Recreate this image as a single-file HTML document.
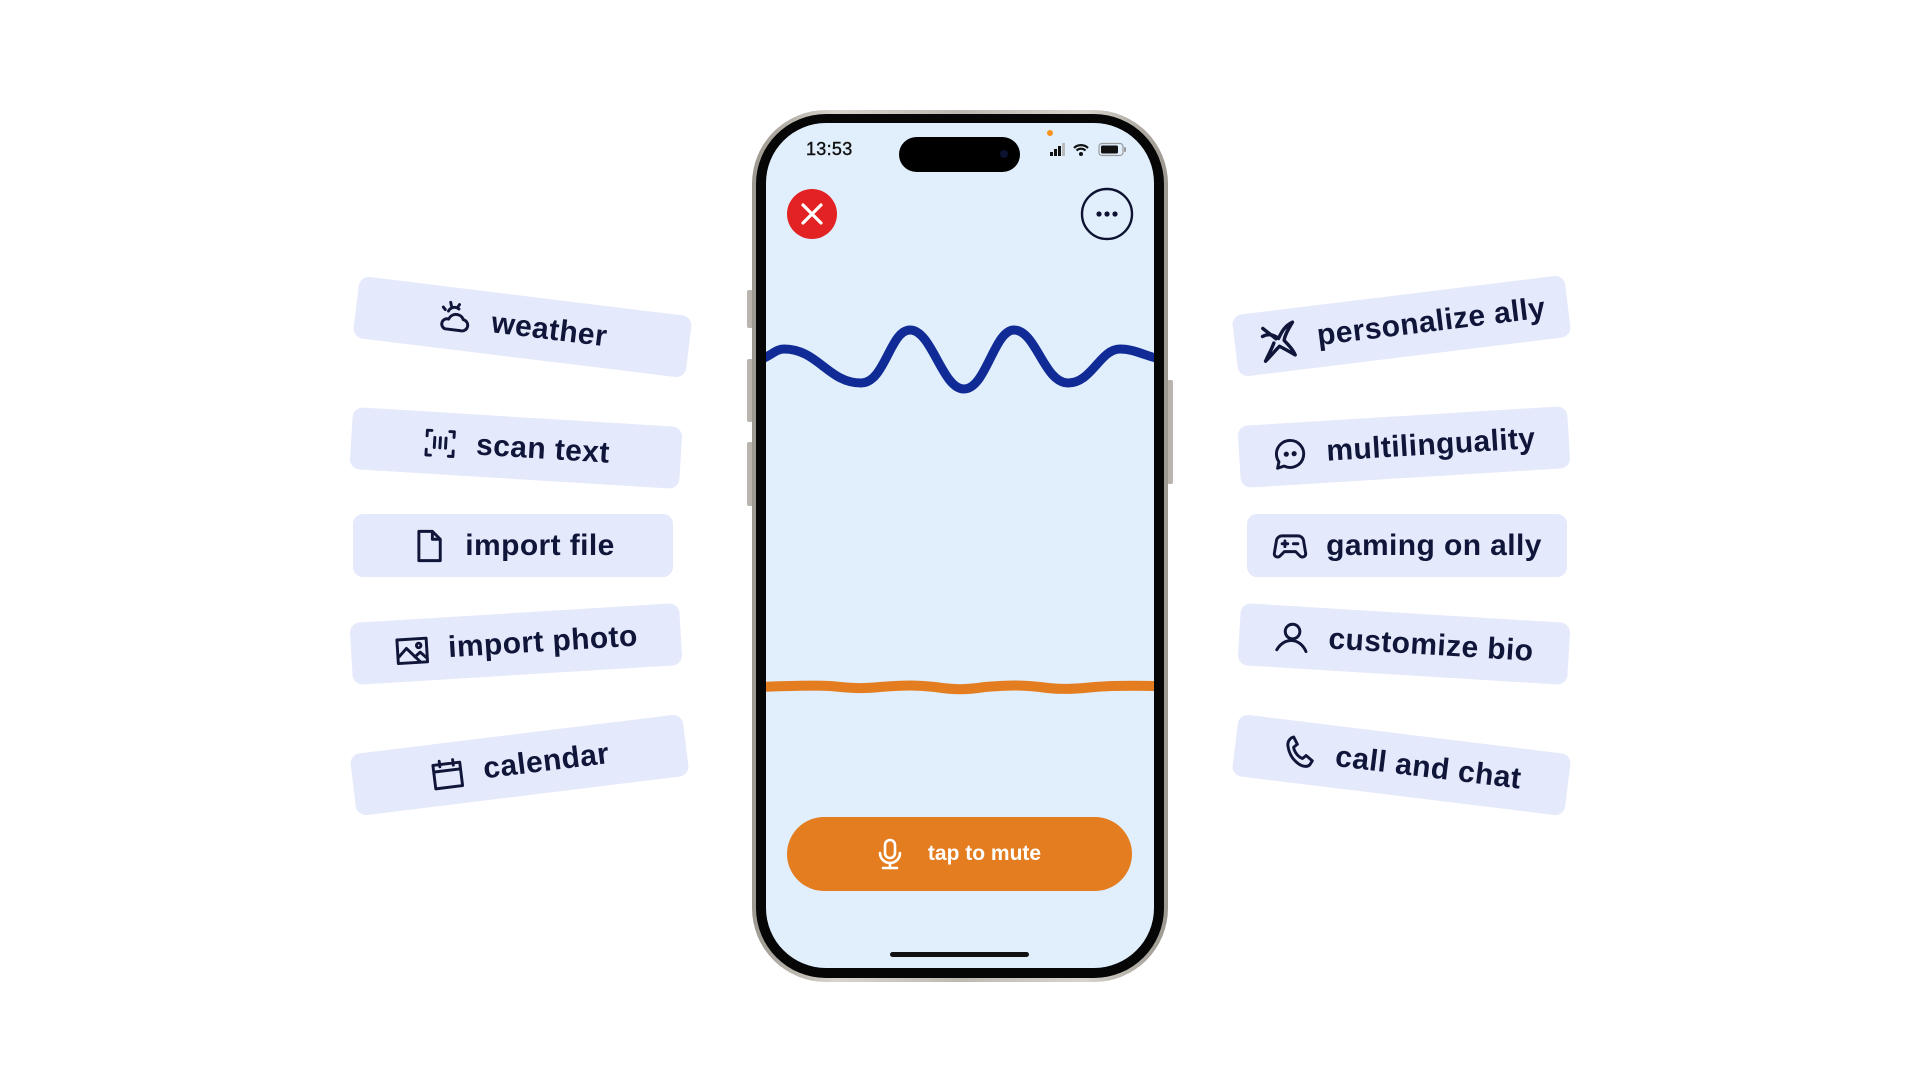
<!DOCTYPE html>
<html><head><meta charset="utf-8"><style>
html,body{margin:0;padding:0;background:#fff;width:1920px;height:1080px;overflow:hidden;font-family:"Liberation Sans",sans-serif}
.pill{position:absolute;background:#e4e9fb;border-radius:10px;display:flex;align-items:center;justify-content:center;gap:18px;color:#10163a;font-weight:700;font-size:30px;letter-spacing:0.4px}
.pill svg{width:36px;height:36px;fill:none;stroke:#10163a;stroke-width:2.6;stroke-linecap:round;stroke-linejoin:round;flex:none}
.abs{position:absolute}
</style></head><body>

<!-- left pills -->
<div class="pill" style="left:355px;top:296px;width:335px;height:62px;transform:rotate(7deg)"><svg viewBox="0 0 32 32"><path d="M9 10a6 6 0 0 1 9-3M6 9l-2-2M11 5l-1-3M17 5l1-2M8 26h14a5 5 0 0 0 1-10 7 7 0 0 0-13 1 4.5 4.5 0 0 0-2 9z"/></svg><span>weather</span></div>
<div class="pill" style="left:351px;top:417px;width:330px;height:62px;transform:rotate(3.5deg)"><svg viewBox="0 0 32 32"><path d="M4 10V5h4M28 10V5h-4M4 22v5h4M28 22v5h-4M11 11v9M16 11v9M21 11v9"/></svg><span>scan text</span></div>
<div class="pill" style="left:353px;top:514px;width:320px;height:63px"><svg viewBox="0 0 32 32"><path d="M7 3h12l7 7v19H7z M19 3v7h7"/></svg><span>import file</span></div>
<div class="pill" style="left:351px;top:613px;width:330px;height:62px;transform:rotate(-3.5deg)"><svg viewBox="0 0 32 32"><path d="M3 6h26v21H3z M3 22l8-8 12 13 M18 22l5-4 6 6"/><circle cx="22" cy="12" r="2"/></svg><span>import photo</span></div>
<div class="pill" style="left:352px;top:734px;width:335px;height:62px;transform:rotate(-7deg)"><svg viewBox="0 0 32 32"><path d="M4 7h24v21H4z M4 13h24 M10 4v5 M22 4v5"/></svg><span>calendar</span></div>

<!-- right pills -->
<div class="pill" style="left:1234px;top:295px;width:335px;height:62px;transform:rotate(-7deg)"><svg viewBox="0 0 32 32" style="width:42px;height:42px"><path d="M5 5l9 9 M4 11c5-2 9 0 12 3 3-5 6-9 12-11-4 5-7 9-8 13 3 4 6 8 7 12-4-3-8-6-11-8-4 3-8 7-12 10 3-5 6-9 8-13"/></svg><span>personalize ally</span></div>
<div class="pill" style="left:1239px;top:416px;width:330px;height:62px;transform:rotate(-3.5deg)"><svg viewBox="0 0 32 32"><path d="M16 4a12 12 0 1 1-6 22.4L4 28l1.6-5.6A12 12 0 0 1 16 4z"/><circle cx="12.5" cy="16" r="1" fill="#10163a"/><circle cx="19.5" cy="16" r="1" fill="#10163a"/></svg><span>multilinguality</span></div>
<div class="pill" style="left:1247px;top:514px;width:320px;height:63px"><svg viewBox="0 0 32 32"><path d="M9 7h14a5 5 0 0 1 5 4l2 12a3 3 0 0 1-5 2l-4-4h-10l-4 4a3 3 0 0 1-5-2l2-12a5 5 0 0 1 5-4z M9 14h5 M11.5 11.5v5 M19 14h4"/></svg><span>gaming on ally</span></div>
<div class="pill" style="left:1239px;top:613px;width:330px;height:62px;transform:rotate(3.5deg)"><svg viewBox="0 0 32 32"><circle cx="16" cy="11" r="6.5"/><path d="M3 28c3-6 8-9 13-9s10 3 13 9"/></svg><span>customize bio</span></div>
<div class="pill" style="left:1234px;top:734px;width:335px;height:62px;transform:rotate(7deg)"><svg viewBox="0 0 32 32"><path d="M9 3l4 6-3 3c1 4 5 8 9 9l3-3 6 4-2 4c-2 2-5 2-8 1C11 24 7 19 5 12c-1-3 0-6 2-8z"/></svg><span>call and chat</span></div>

<!-- phone side buttons -->
<div class="abs" style="left:747px;top:290px;width:6px;height:38px;background:#b9b5ae;border-radius:2px"></div>
<div class="abs" style="left:747px;top:359px;width:6px;height:63px;background:#b9b5ae;border-radius:2px"></div>
<div class="abs" style="left:747px;top:442px;width:6px;height:64px;background:#b9b5ae;border-radius:2px"></div>
<div class="abs" style="left:1167px;top:380px;width:6px;height:104px;background:#b9b5ae;border-radius:2px"></div>

<!-- phone frame -->
<div class="abs" style="left:752px;top:110px;width:416px;height:872px;border-radius:74px;background:linear-gradient(90deg,#9c978f,#d8d4cd 20%,#bdb8b0 50%,#d8d4cd 80%,#9c978f)"></div>
<div class="abs" style="left:756px;top:114px;width:408px;height:864px;border-radius:70px;background:#060606"></div>
<div class="abs" style="left:766px;top:123px;width:388px;height:845px;border-radius:60px;background:#e1effd;overflow:hidden"></div>

<!-- status bar -->
<div class="abs" style="left:806px;top:139px;font-size:18px;font-weight:400;color:#111;letter-spacing:0.3px;-webkit-text-stroke:0.4px #111">13:53</div>
<div class="abs" style="left:899px;top:137px;width:121px;height:35px;border-radius:18px;background:#000"></div>
<div class="abs" style="left:1000px;top:150px;width:8px;height:8px;border-radius:50%;background:#0c1230"></div>
<div class="abs" style="left:1047px;top:130px;width:6px;height:6px;border-radius:50%;background:#f7931e"></div>
<svg class="abs" style="left:1048px;top:140px" width="86" height="20" viewBox="0 0 86 20">
<rect x="2" y="12" width="3" height="4" fill="#111"/><rect x="6" y="9" width="3" height="7" fill="#111"/><rect x="10" y="6" width="3" height="10" fill="#111"/><rect x="14" y="3" width="3" height="13" fill="#bbb"/>
<path d="M26 8a10 10 0 0 1 14 0 M28.5 10.5a6.5 6.5 0 0 1 9 0" stroke="#111" stroke-width="2.2" fill="none"/><circle cx="33" cy="14" r="2" fill="#111"/>
<rect x="51" y="3.5" width="24" height="12" rx="3" fill="none" stroke="#999" stroke-width="1.2"/><rect x="53" y="5.5" width="17" height="8" rx="1.5" fill="#111"/><rect x="76" y="7" width="2" height="5" rx="1" fill="#999"/>
</svg>

<!-- close & more -->
<svg class="abs" style="left:786px;top:188px" width="52" height="52" viewBox="0 0 52 52"><circle cx="26" cy="26" r="25" fill="#e32323"/><path d="M17 17l18 18M35 17L17 35" stroke="#fff" stroke-width="3.2" stroke-linecap="round"/></svg>
<svg class="abs" style="left:1080px;top:187px" width="54" height="54" viewBox="0 0 54 54"><circle cx="27" cy="27" r="25" fill="none" stroke="#0c1230" stroke-width="2.4"/><circle cx="19" cy="27" r="2.6" fill="#0c1230"/><circle cx="27" cy="27" r="2.6" fill="#0c1230"/><circle cx="35" cy="27" r="2.6" fill="#0c1230"/></svg>

<!-- waves -->
<svg class="abs" style="left:0;top:0" width="1920" height="1080">
<defs><clipPath id="c"><rect x="766" y="123" width="388" height="845"/></clipPath></defs>
<g clip-path="url(#c)" fill="none" stroke-linecap="round">
<path d="M760,360 C772,355 776,349 784,349 C818,349 828,383 861,383 C885,383 890,330 910,330 C932,330 942,389 964,389 C986,389 994,330 1014,330 C1036,330 1044,383 1068,383 C1092,383 1100,349 1120,349 C1135,349 1145,356 1160,359" stroke="#102b96" stroke-width="9"/>
<path d="M760,687 C790,686 810,685 830,686 C850,688 860,689 880,687 C905,685 915,685 935,687 C955,690 965,690 985,687 C1010,685 1020,685 1040,687 C1060,690 1075,689 1095,687 C1120,685 1140,686 1160,686" stroke="#e47d20" stroke-width="10"/>
</g>
</svg>

<!-- mute button -->
<div class="abs" style="left:787px;top:817px;width:345px;height:74px;border-radius:37px;background:#e47d20;display:flex;align-items:center;justify-content:center;gap:26px;color:#fff;font-weight:700;font-size:21px">
<svg width="24" height="32" viewBox="0 0 24 32" fill="none" stroke="#fff" stroke-width="2.6" stroke-linecap="round"><rect x="7" y="2" width="10" height="18" rx="5"/><path d="M2 15a10 10 0 0 0 20 0M12 25v4M5 30h14"/></svg>
<span>tap to mute</span></div>

<!-- home bar -->
<div class="abs" style="left:890px;top:952px;width:139px;height:5px;border-radius:3px;background:#111"></div>

</body></html>
